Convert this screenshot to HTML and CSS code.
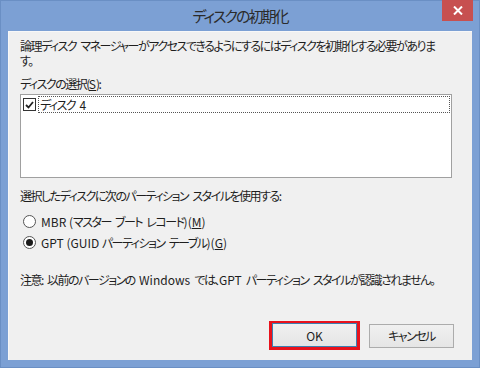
FILE: index.html
```html
<!DOCTYPE html>
<html lang="ja">
<head>
  <meta charset="UTF-8">
  <title>ディスクの初期化</title>
  <link rel="stylesheet" href="styles.css">
</head>
<body>
  <div class="window">
    <div class="titleBar">
      <span class="title">ディスクの初期化</span>
      <span class="closeBtn">
        <svg width="10" height="9" viewBox="0 0 10 9">
          <path d="M1 0.5 L9 8.5 M9 0.5 L1 8.5" stroke="#fff" stroke-width="2"/>
        </svg>
      </span>
    </div>

    <div class="client">
      <p class="intro">論理ディスク マネージャーがアクセスできるようにするにはディスクを初期化する必要がありま<br>す。</p>
      <p class="label">ディスクの選択(<u class="lat">S</u>):</p>

      <div class="listBox">
        <div class="listItem">
          <span class="checkBox">
            <svg width="9" height="8" viewBox="0 0 9 8">
              <path d="M1 4 L3.5 6.5 L8 1" fill="none" stroke="#222" stroke-width="1.8"/>
            </svg>
          </span>
          <span class="itemText">ディスク <span class="lat">4</span></span>
        </div>
      </div>

      <p class="label styleLabel">選択したディスクに次のパーティション スタイルを使用する:</p>
      <div class="radioGroup">
        <div class="radioRow">
          <span class="radio"></span>
          <span><span class="lat">MBR (</span>マスター ブート レコード<span class="lat">)(<u>M</u>)</span></span>
        </div>
        <div class="radioRow">
          <span class="radio checked"></span>
          <span><span class="lat">GPT (GUID </span>パーティション テーブル<span class="lat">)(<u>G</u>)</span></span>
        </div>
      </div>

      <p class="note">注意: 以前のバージョンの <span class="lat">Windows</span> では、<span class="lat">GPT</span> パーティション スタイルが認識されません。</p>

      <div class="buttons">
        <span class="btnMark"><button class="btn btnDefault"><span class="lat">OK</span></button></span>
        <button class="btn">キャンセル</button>
      </div>
    </div>
  </div>
</body>
</html>
```

FILE: styles.css
```css
html, body {
  margin: 0;
  padding: 0;
  background-color: #7ca0d4;
  font-family: "Noto Sans CJK JP", "Noto Sans", sans-serif;
  font-size: 12px;
  color: #1e1e1e;
}

.window {
  width: 480px;
  height: 368px;
  box-sizing: border-box;
  border: 1px solid #6a8fc4;
  background-color: #7ca0d4;
  display: flex;
  flex-direction: column;
}

.titleBar {
  height: 30px;
  position: relative;
  display: flex;
  justify-content: center;
  align-items: center;
}

.title {
  font-size: 15px;
  color: #2b2b2b;
  letter-spacing: -2px;
  font-feature-settings: "palt";
  margin-top: -1px;
}

.closeBtn {
  position: absolute;
  top: -1px;
  right: 6px;
  width: 31px;
  height: 21px;
  background-color: #c75050;
  display: flex;
  justify-content: center;
  align-items: center;
}

.client {
  margin: 0 7px;
  height: 329px;
  box-sizing: border-box;
  background-color: #f0f0f0;
  border-left: 1px solid #f8f8f8;
  border-top: 1px solid #f8f8f8;
  padding: 6px 20px 0 11px;
  display: flex;
  flex-direction: column;
  font-feature-settings: "palt";
  letter-spacing: -1.5px;
  word-spacing: 3px;
  white-space: nowrap;
}

.lat {
  letter-spacing: 0;
  word-spacing: 0;
}

p {
  margin: 0;
  line-height: 15px;
}

.label {
  margin-top: 8px;
}

.listBox {
  margin-top: 3px;
  height: 84px;
  box-sizing: border-box;
  border: 1px solid #a0a0a0;
  background-color: #fff;
  padding: 1px;
}

.listItem {
  height: 17px;
  display: flex;
  align-items: center;
  gap: 2px;
  padding-left: 1px;
}

.checkBox {
  width: 11px;
  height: 11px;
  border: 1px solid #333;
  background-color: #fff;
  display: flex;
  justify-content: center;
  align-items: center;
}

.itemText {
  flex: 1;
  height: 17px;
  line-height: 17px;
  padding-left: 2px;
  outline: 1px dotted #555;
  outline-offset: -1px;
}

.styleLabel {
  margin-top: 10px;
}

.radioGroup {
  margin-top: 8px;
  display: flex;
  flex-direction: column;
}

.radioRow {
  height: 21px;
  display: flex;
  align-items: center;
  gap: 5px;
  padding-left: 3px;
}

.radio {
  width: 11px;
  height: 11px;
  border: 1px solid #555;
  border-radius: 50%;
  background-color: #fff;
  display: flex;
  justify-content: center;
  align-items: center;
}

.radio.checked::after {
  content: "";
  width: 7px;
  height: 7px;
  border-radius: 50%;
  background-color: #1a1a1a;
}

.note {
  margin-top: 19px;
}

.buttons {
  margin-top: auto;
  margin-bottom: 10px;
  display: flex;
  justify-content: flex-end;
  align-items: center;
  gap: 9px;
  margin-right: -2px;
}

.btnMark {
  border: 3px solid #e8121c;
  border-top-width: 2px;
  display: flex;
}

.btn {
  width: 85px;
  height: 24px;
  font-family: inherit;
  font-size: 12px;
  letter-spacing: -1.5px;
  color: #1e1e1e;
  background: linear-gradient(#f0f0f0, #e5e5e5);
  border: 1px solid #acacac;
  padding: 0;
  font-feature-settings: "palt";
}

.btnDefault {
  border-color: #3c7fb1;
}
```
